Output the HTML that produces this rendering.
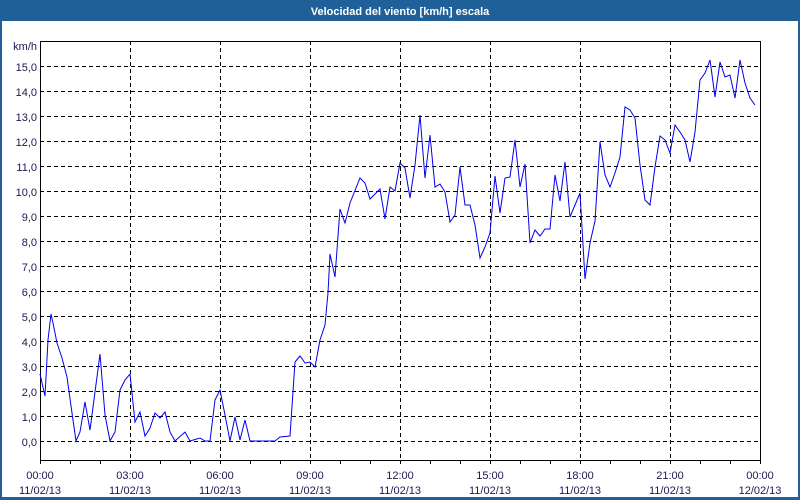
<!DOCTYPE html>
<html><head><meta charset="utf-8"><style>
html,body{margin:0;padding:0;width:800px;height:500px;overflow:hidden;background:#fff}
</style></head><body>
<svg width="800" height="500" xmlns="http://www.w3.org/2000/svg" style="display:block;font-family:'Liberation Sans',sans-serif">
<rect x="0" y="0" width="800" height="500" fill="#1f6098"/>
<rect x="2" y="21" width="796" height="476" fill="#fff"/>
<text x="400" y="15" fill="#fff" font-size="11" font-weight="bold" text-anchor="middle">Velocidad del viento [km/h] escala</text>
<g stroke="#000" stroke-width="1" stroke-dasharray="4,3" shape-rendering="crispEdges">
<line x1="40" x2="760" y1="441.5" y2="441.5"/><line x1="40" x2="760" y1="416.5" y2="416.5"/>
<line x1="40" x2="760" y1="391.5" y2="391.5"/><line x1="40" x2="760" y1="366.5" y2="366.5"/>
<line x1="40" x2="760" y1="341.5" y2="341.5"/><line x1="40" x2="760" y1="316.5" y2="316.5"/>
<line x1="40" x2="760" y1="291.5" y2="291.5"/><line x1="40" x2="760" y1="266.5" y2="266.5"/>
<line x1="40" x2="760" y1="241.5" y2="241.5"/><line x1="40" x2="760" y1="216.5" y2="216.5"/>
<line x1="40" x2="760" y1="191.5" y2="191.5"/><line x1="40" x2="760" y1="166.5" y2="166.5"/>
<line x1="40" x2="760" y1="141.5" y2="141.5"/><line x1="40" x2="760" y1="116.5" y2="116.5"/>
<line x1="40" x2="760" y1="91.5" y2="91.5"/><line x1="40" x2="760" y1="66.5" y2="66.5"/>
<line x1="130.5" x2="130.5" y1="41" y2="460"/><line x1="220.5" x2="220.5" y1="41" y2="460"/>
<line x1="310.5" x2="310.5" y1="41" y2="460"/><line x1="400.5" x2="400.5" y1="41" y2="460"/>
<line x1="490.5" x2="490.5" y1="41" y2="460"/><line x1="580.5" x2="580.5" y1="41" y2="460"/>
<line x1="670.5" x2="670.5" y1="41" y2="460"/>
</g>
<g stroke="#000" stroke-width="1" fill="none" shape-rendering="crispEdges">
<path d="M40.5 41.5H760.5V460.5H40.5Z"/>
<path d="M70.5 460V464M100.5 460V464M130.5 460V464M160.5 460V464M190.5 460V464M220.5 460V464M250.5 460V464M280.5 460V464M310.5 460V464M340.5 460V464M370.5 460V464M400.5 460V464M430.5 460V464M460.5 460V464M490.5 460V464M520.5 460V464M550.5 460V464M580.5 460V464M610.5 460V464M640.5 460V464M670.5 460V464M700.5 460V464M730.5 460V464M40.5 460V464M760.5 460V464"/>
</g>
<polyline fill="none" stroke="#0000ee" stroke-width="1" points="40,374 45,396 48,340 51,314 53,323 57,343 62,358 67,377 72,413 76,441 80,432 85,402 90,430 95,392 100,354 105,415 110,441 115,432 120,390 125,380 130,374 135,422 140,412 145,436 150,428 155,413 160,418 165,412 170,432 175,441 185,432 190,441 200,438 205,441 210,441 215,400 220,390 225,415 230,441 235,417 240,440 245,420 250,441 275,441 280,437 290,436 295,362 300,356 305,363 310,362 315,367 320,340 325,325 328,293 330,254 335,277 340,209 345,223 350,203 360,178 365,183 370,199 380,189 385,219 390,187 395,191 400,163 405,168 410,198 415,165 420,115 425,178 430,135 435,187 440,184 445,192 450,222 455,215 460,167 465,205 470,205 475,225 480,258 485,247 490,233 495,176 500,213 505,178 510,177 515,140 520,187 525,164 530,243 535,230 540,236 545,229 550,229 555,175 560,201 565,162 570,217 580,193 585,279 590,243 595,221 600,142 605,175 610,187 615,173 620,157 625,107 630,110 635,118 640,165 645,200 650,205 655,167 660,136 665,140 670,153 675,125 680,132 685,140 690,162 695,132 700,80 705,73 710,60 715,97 720,62 725,77 730,75 735,98 740,60 745,83 750,98 755,105"/>
<g fill="#1a1a50" font-size="11" text-anchor="end">
<text x="37" y="50">km/h</text>
<text x="37" y="71">15,0</text><text x="37" y="96">14,0</text><text x="37" y="121">13,0</text>
<text x="37" y="146">12,0</text><text x="37" y="171">11,0</text><text x="37" y="196">10,0</text>
<text x="37" y="221">9,0</text><text x="37" y="246">8,0</text><text x="37" y="271">7,0</text>
<text x="37" y="296">6,0</text><text x="37" y="321">5,0</text><text x="37" y="346">4,0</text>
<text x="37" y="371">3,0</text><text x="37" y="396">2,0</text><text x="37" y="421">1,0</text>
<text x="37" y="446">0,0</text>
</g>
<g fill="#1a1a50" font-size="11" text-anchor="middle">
<text x="40" y="479">00:00</text><text x="40" y="494">11/02/13</text>
<text x="130" y="479">03:00</text><text x="130" y="494">11/02/13</text>
<text x="220" y="479">06:00</text><text x="220" y="494">11/02/13</text>
<text x="310" y="479">09:00</text><text x="310" y="494">11/02/13</text>
<text x="400" y="479">12:00</text><text x="400" y="494">11/02/13</text>
<text x="490" y="479">15:00</text><text x="490" y="494">11/02/13</text>
<text x="580" y="479">18:00</text><text x="580" y="494">11/02/13</text>
<text x="670" y="479">21:00</text><text x="670" y="494">11/02/13</text>
<text x="760" y="479">00:00</text><text x="760" y="494">12/02/13</text>
</g>
</svg>
</body></html>
